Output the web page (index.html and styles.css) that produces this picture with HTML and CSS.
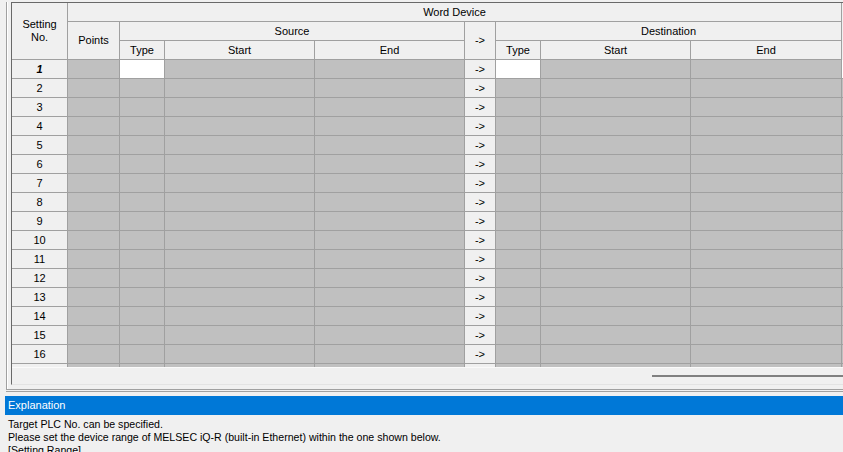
FILE: index.html
```html
<!DOCTYPE html>
<html>
<head>
  <title>Word Device Settings</title>
  <link rel="stylesheet" href="styles.css">
</head>
<body>
  <div class="group">
    <div class="frame">
      <div class="viewport">
        <table class="grid">
          <colgroup>
            <col class="c-no">
            <col class="c-points">
            <col class="c-type">
            <col class="c-range">
            <col class="c-range">
            <col class="c-arrow">
            <col class="c-type">
            <col class="c-range">
            <col class="c-last">
            <col class="c-next">
          </colgroup>
          <thead>
            <tr>
              <th rowspan="3" class="no-head">Setting<br>No.</th>
              <th colspan="8">Word Device</th>
              <th rowspan="3" class="next"></th>
            </tr>
            <tr>
              <th rowspan="2">Points</th>
              <th colspan="3">Source</th>
              <th rowspan="2">-&gt;</th>
              <th colspan="3">Destination</th>
            </tr>
            <tr>
              <th>Type</th>
              <th>Start</th>
              <th>End</th>
              <th>Type</th>
              <th>Start</th>
              <th>End</th>
            </tr>
          </thead>
          <tbody id="rows"></tbody>
        </table>
      </div>
      <div class="hscroll">
        <div class="thumb"></div>
      </div>
    </div>
  </div>
  <div class="rule"></div>

  <div class="explain">
    <div class="explain-title">Explanation</div>
    <div class="explain-text">
      Target PLC No. can be specified.<br>
      Please set the device range of MELSEC iQ-R (built-in Ethernet) within the one shown below.<br>
      [Setting Range]
    </div>
  </div>

  <script>
    // 16 setting rows plus the top edge of the next one under the fold
    const tbody = document.getElementById("rows");
    for (let i = 1; i <= 17; i++) {
      const tr = document.createElement("tr");
      const cur = i === 1;
      const label = i <= 16 ? i : "";
      const arrow = i <= 16 ? "-&gt;" : "";
      tr.innerHTML =
        '<td class="num' + (cur ? ' current' : '') + '">' + label + '</td>' +
        '<td class="off"></td>' +
        '<td class="' + (cur ? 'edit' : 'off') + '"></td>' +
        '<td class="off"></td>' +
        '<td class="off"></td>' +
        '<td class="arrow">' + arrow + '</td>' +
        '<td class="' + (cur ? 'edit' : 'off') + '"></td>' +
        '<td class="off"></td>' +
        '<td class="off"></td>' +
        '<td class="' + (cur ? 'edit' : 'off') + '"></td>';
      tbody.appendChild(tr);
    }
  </script>
</body>
</html>
```

FILE: styles.css
```css
html, body {
  margin: 0;
  width: 843px;
  height: 452px;
  overflow: hidden;
}

body {
  background: #f0f0f0;
  font-family: "Liberation Sans", Arial, sans-serif;
  font-size: 11px;
  color: #000;
}

/* outer etched group box */
.group {
  margin-left: 6px;
  border-left: 1px solid #a0a0a0;
  box-shadow: inset 1px 0 #fff;
  border-bottom: 1px solid #a0a0a0;
  padding-left: 4px;
  padding-bottom: 4px;
}

.rule {
  margin-left: 6px;
  height: 1px;
  border-bottom: 1px solid #a0a0a0;
}

/* sunken grid control */
.frame {
  margin-top: 2px;
  border-top: 1px solid #696969;
  border-left: 1px solid #696969;
  border-bottom: 1px solid #e3e3e3;
}

.viewport {
  height: 364px;
  overflow: hidden;
}

.grid {
  border-collapse: separate;
  border-spacing: 0;
  table-layout: fixed;
  width: 952px;
}

.c-no { width: 56px; }
.c-points { width: 52px; }
.c-type { width: 45px; }
.c-range { width: 150px; }
.c-arrow { width: 31px; }
.c-last { width: 151px; }
.c-next { width: 122px; }

.grid th,
.grid td {
  height: 18px;
  padding: 0;
  border-right: 1px solid #a0a0a0;
  border-bottom: 1px solid #a0a0a0;
  text-align: center;
  vertical-align: middle;
  font-weight: normal;
  line-height: 13px;
  white-space: nowrap;
  overflow: hidden;
}

.grid th {
  background: #f0f0f0;
}

.grid th.next {
  border: none;
}

.grid td.num,
.grid td.arrow {
  background: #f0f0f0;
}

.grid td.current {
  font-weight: bold;
  font-style: italic;
}

.grid td.off {
  background: #c0c0c0;
}

.grid td.edit {
  background: #fff;
}

.hscroll {
  height: 16px;
  border-top: 1px solid #fafafa;
  overflow: hidden;
}

.thumb {
  margin-top: 7px;
  margin-left: 640px;
  height: 2px;
  background: #808080;
}

.explain {
  margin-top: 4px;
  margin-left: 5px;
}

.explain-title {
  height: 19px;
  line-height: 19px;
  padding-left: 3px;
  background: #0078d7;
  color: #fff;
}

.explain-text {
  padding: 3px 0 0 3px;
  font-size: 10.6px;
  line-height: 13px;
  white-space: nowrap;
}
```
